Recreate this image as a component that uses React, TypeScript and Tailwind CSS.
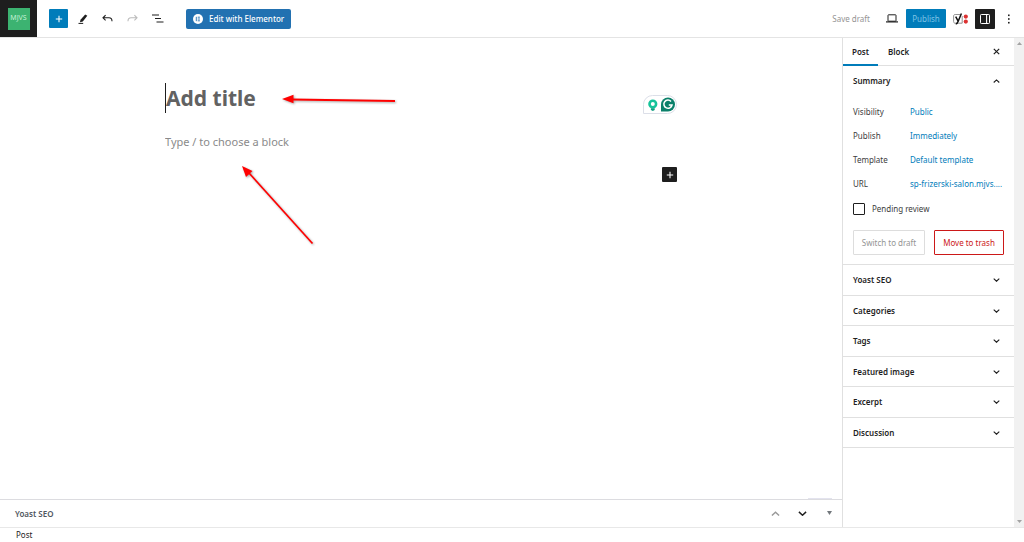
import React, { useState } from 'react';

const settings = [
    { label: 'Visibility', value: 'Public' },
    { label: 'Publish', value: 'Immediately' },
    { label: 'Template', value: 'Default template' },
    { label: 'URL', value: 'sp-frizerski-salon.mjvs....' },
];

const panels = ['Yoast SEO', 'Categories', 'Tags', 'Featured image', 'Excerpt', 'Discussion'];

const Chevron: React.FC<{ up?: boolean; className?: string }> = ({ up, className = 'w-[7px]' }) => (
    <svg viewBox="0 0 10 6" className={className} fill="none" stroke="currentColor" strokeWidth="1.6">
        <path d={up ? 'M1 5 L5 1.3 L9 5' : 'M1 1 L5 4.7 L9 1'} />
    </svg>
);

const Plus: React.FC = () => (
    <svg viewBox="0 0 10 10" className="w-2 h-2" stroke="currentColor" strokeWidth="1.3">
        <path d="M5 1v8M1 5h8" />
    </svg>
);

const Header: React.FC = () => (
    <header className="flex items-center h-[38px] shrink-0 border-b border-[#e4e4e4]">
        <a href="#" className="flex items-center justify-center w-[37px] h-[37px] bg-[#1e1e1e]">
            <span className="flex items-center justify-center w-[22px] h-[22px] bg-[#3cb371] text-[7px] text-[#c5f0d5]">MJVS</span>
        </a>
        <button aria-label="Add block" className="flex items-center justify-center w-[19px] h-[19px] ml-3 rounded-[1px] bg-[#007cba] text-white">
            <Plus />
        </button>
        <div className="flex items-center ml-[10px] gap-[14px] text-[#1e1e1e]">
            <button aria-label="Tools">
                <svg viewBox="0 0 10 10" className="w-[10px] h-[10px]">
                    <path d="M7.2 0.4 L9.3 1.8 L4.8 7.4 L2 8.2 L2.5 5.8z" fill="currentColor" />
                    <path d="M0.5 9.4h4.7" stroke="currentColor" strokeWidth="1" />
                </svg>
            </button>
            <button aria-label="Undo">
                <svg viewBox="0 0 11 9" className="w-[11px] h-[9px]" fill="none" stroke="currentColor" strokeWidth="1.1">
                    <path d="M3.6 1.2 L1 3.8 L3.6 6.4M1 3.8h6c2 0 3 1 3 3.4" />
                </svg>
            </button>
            <button aria-label="Redo" className="text-[#bbb]">
                <svg viewBox="0 0 11 9" className="w-[11px] h-[9px]" fill="none" stroke="currentColor" strokeWidth="1.1">
                    <path d="M7.4 1.2 L10 3.8 L7.4 6.4M10 3.8H4C2 3.8 1 4.8 1 7.2" />
                </svg>
            </button>
            <button aria-label="Document overview">
                <svg viewBox="0 0 12 9" className="w-3 h-[9px]" stroke="currentColor" strokeWidth="1.2">
                    <path d="M0 1h7M3 4.5h6M4.5 8h7" />
                </svg>
            </button>
        </div>
        <button className="flex items-center justify-center h-5 ml-[22px] px-[7px] gap-[6px] rounded-[2px] bg-[#2271b1] text-[8px] font-medium text-white whitespace-nowrap">
            <svg viewBox="0 0 10 10" className="w-[10px] h-[10px]">
                <circle cx="5" cy="5" r="5" fill="#fff" />
                <path d="M3.3 2.8v4.4M4.7 3.2h2.2M4.7 5h2.2M4.7 6.8h2.2" stroke="#2271b1" strokeWidth="0.9" />
            </svg>
            Edit with Elementor
        </button>
        <div className="flex items-center ml-auto">
            <button className="text-[8px] text-[#949494]">Save draft</button>
            <button aria-label="Preview" className="ml-4 text-[#1e1e1e]">
                <svg viewBox="0 0 12 9" className="w-3 h-[9px]" fill="none" stroke="currentColor">
                    <rect x="2" y="0.8" width="8" height="6.4" rx="0.5" />
                    <path d="M0 7.9h12" strokeWidth="1.2" />
                </svg>
            </button>
            <button className="w-10 h-[19px] ml-2 rounded-[1px] bg-[#007cba] text-[8px] text-[#7cc3e6]">Publish</button>
            <button aria-label="Yoast SEO" className="ml-[7px]">
                <svg viewBox="0 0 15 12" className="w-[15px] h-3">
                    <path d="M7 1.5H2.2C1.2 1.5 0.6 2.1 0.6 3v5.6c0 1 0.6 1.6 1.6 1.6h7V3" fill="none" stroke="#777" strokeWidth="0.8" />
                    <path d="M2.7 3.6 L5 7.9 M8.4 0.5 L5.2 8.3 C4.7 9.7 4.1 10.8 2.8 10.9" fill="none" stroke="#111" strokeWidth="1.5" />
                    <circle cx="12.8" cy="3.6" r="2.1" fill="#dc3232" />
                    <circle cx="12.8" cy="8.6" r="2.1" fill="#dc3232" />
                </svg>
            </button>
            <button aria-label="Settings" className="flex items-center justify-center w-5 h-5 ml-[7px] rounded-[1px] bg-[#1e1e1e] text-white">
                <svg viewBox="0 0 10 10" className="w-[10px] h-[10px]" fill="none" stroke="currentColor">
                    <rect x="0.5" y="0.5" width="9" height="9" rx="0.8" />
                    <path d="M6.6 0.5v9" strokeWidth="1.1" />
                </svg>
            </button>
            <button aria-label="Options" className="ml-[13px] mr-[14px]">
                <svg viewBox="0 0 2 10" className="w-[2px] h-[10px]" fill="#1e1e1e">
                    <rect y="0.5" width="1.6" height="1.6" />
                    <rect y="4.2" width="1.6" height="1.6" />
                    <rect y="7.9" width="1.6" height="1.6" />
                </svg>
            </button>
        </div>
    </header>
);

const Editor: React.FC = () => (
    <section className="relative flex-1 overflow-hidden">
        <div className="w-full max-w-[512px] mx-auto pt-[45px]">
            <div className="flex items-center h-[30px]">
                <input
                    aria-label="Add title"
                    placeholder="Add title"
                    className="flex-1 min-w-0 h-[30px] pt-[2px] border-l border-[#1e1e1e] text-[21px] font-bold placeholder:text-[#626262] outline-none"
                />
                <svg viewBox="0 0 34 19" className="w-[34px] h-[19px] mt-3">
                    <path d="M0.5 18.5V9.5a9 9 0 0 1 9-9h15a9 9 0 0 1 0 18z" fill="#fff" stroke="#dcdfe8" />
                    <circle cx="9.8" cy="9" r="3.3" fill="none" stroke="#15c39a" strokeWidth="2.6" />
                    <path d="M7.9 13.3h3.8v1.6l-1.9 1.2-1.9-1.2z" fill="#0f9d80" />
                    <path d="M18 9.5a7 7 0 1 1 7 7h-7z" fill="#0b806a" />
                    <path d="M28 6.4A4.1 4.1 0 1 0 29 10H25.8" fill="none" stroke="#fff" strokeWidth="1.5" />
                </svg>
            </div>
            <input
                aria-label="Block content"
                placeholder="Type / to choose a block"
                className="block w-full h-5 mt-[18px] text-[11px] placeholder:text-[#8a8a8a] outline-none"
            />
            <div className="flex justify-end mt-4">
                <button aria-label="Add block" className="flex items-center justify-center w-[15px] h-[15px] rounded-[1px] bg-[#1e1e1e] text-white">
                    <Plus />
                </button>
            </div>
        </div>

        {/* Annotation arrows */}
        <svg viewBox="0 0 240 160" className="absolute left-1/2 top-[52px] w-60 h-40 -ml-[181px] pointer-events-none drop-shadow-[1px_1px_1px_rgba(0,0,0,0.35)]">
            <path d="M52 9.5 L155 11" stroke="#f00" strokeWidth="2" />
            <path d="M42 9 L53.5 4.8 L53.5 13.2z" fill="#f00" />
            <path d="M9 83 L72.5 153.5" stroke="#f00" strokeWidth="1.7" />
            <path d="M2 76 L12.5 81 L6 87z" fill="#f00" />
        </svg>
        {/* Resize handle peeking over the panel */}
        <span className="absolute right-[10px] bottom-0 w-6 h-px bg-[#e3e3ee]" />
    </section>
);

const Sidebar: React.FC = () => {
    const [pending, setPending] = useState(false);

    return (
        <aside className="w-[172px] shrink-0 border-l border-[#e0e0e0] text-[8px] text-[#1e1e1e]">
            <div className="flex items-center h-7 border-b border-[#e0e0e0] font-semibold">
                <button className="h-7 w-[35px] border-y-2 border-t-transparent border-b-[#007cba]">Post</button>
                <button className="h-7 px-[10px]">Block</button>
                <button aria-label="Close settings" className="ml-auto mr-[14px]">
                    <svg viewBox="0 0 7 7" className="w-[7px] h-[7px]" stroke="currentColor" strokeWidth="1.2">
                        <path d="M0.8 0.8l5.4 5.4M6.2 0.8L0.8 6.2" />
                    </svg>
                </button>
            </div>

            {/* Summary */}
            <div className="pb-[9px] border-b border-[#e0e0e0]">
                <button className="flex items-center justify-between w-full h-[30px] pl-[10px] pr-[14px] font-semibold">
                    Summary
                    <Chevron up />
                </button>
                <div className="pt-1 px-[10px] text-[#3c3c3c]">
                    {settings.map(item => (
                        <div key={item.label} className="flex items-center h-6">
                            <span className="w-[57px]">{item.label}</span>
                            <a href="#" className="text-[#007cba]">{item.value}</a>
                        </div>
                    ))}
                    <label className="flex items-center h-6 mt-px gap-[7px]">
                        <input
                            type="checkbox"
                            checked={pending}
                            onChange={e => setPending(e.target.checked)}
                            className="appearance-none w-3 h-3 border border-[#1e1e1e] rounded-[1px] checked:bg-[#007cba]"
                        />
                        Pending review
                    </label>
                    <div className="flex mt-[9px] gap-[9px]">
                        <button className="w-[72px] h-[25px] border border-[#ddd] rounded-[1px] text-[#949494]">Switch to draft</button>
                        <button className="w-[70px] h-[25px] border border-[#cc1818] rounded-[1px] text-[#cc1818]">Move to trash</button>
                    </div>
                </div>
            </div>

            <div className="grid grid-rows-6 h-[183px]">
                {panels.map(name => (
                    <button key={name} className="flex items-center justify-between pt-px pl-[10px] pr-[14px] border-b border-[#e0e0e0] font-semibold">
                        {name}
                        <Chevron />
                    </button>
                ))}
            </div>
        </aside>
    );
};

export default function App() {
    return (
        <div className="flex flex-col h-screen bg-white font-['Noto_Sans','Open_Sans',sans-serif] text-[#1e1e1e]">
            <Header />
            <main className="flex flex-1 min-h-0">
                <div className="flex flex-col flex-1 min-w-0">
                    <Editor />
                    <div className="flex items-center h-7 shrink-0 pl-[15px] pr-[10px] border-t border-[#dcdce0] text-[8px] font-semibold text-[#50575e]">
                        Yoast SEO
                        <div className="flex items-center ml-auto gap-[18px]">
                            <button aria-label="Move up" className="text-[#999]"><Chevron up className="w-[9px]" /></button>
                            <button aria-label="Move down" className="text-[#1e1e1e]"><Chevron className="w-[9px]" /></button>
                            <button aria-label="Toggle panel" className="ml-[2px] text-[#72777c]">
                                <svg viewBox="0 0 5 4" className="w-[5px] h-1" fill="currentColor"><path d="M0 0h5L2.5 4z" /></svg>
                            </button>
                        </div>
                    </div>
                </div>
                <Sidebar />
                <div className="flex flex-col items-center justify-between w-[10px] shrink-0 py-1 bg-[#f1f1f1] text-[#a3a3a3]">
                    <svg viewBox="0 0 5 3" className="w-[5px] h-[3px]" fill="currentColor"><path d="M0 3h5L2.5 0z" /></svg>
                    <svg viewBox="0 0 5 3" className="w-[5px] h-[3px]" fill="currentColor"><path d="M0 0h5L2.5 3z" /></svg>
                </div>
            </main>
            <footer className="flex items-center h-[15px] shrink-0 pl-4 border-t border-[#e8e8e8] text-[8px]">Post</footer>
        </div>
    );
}
